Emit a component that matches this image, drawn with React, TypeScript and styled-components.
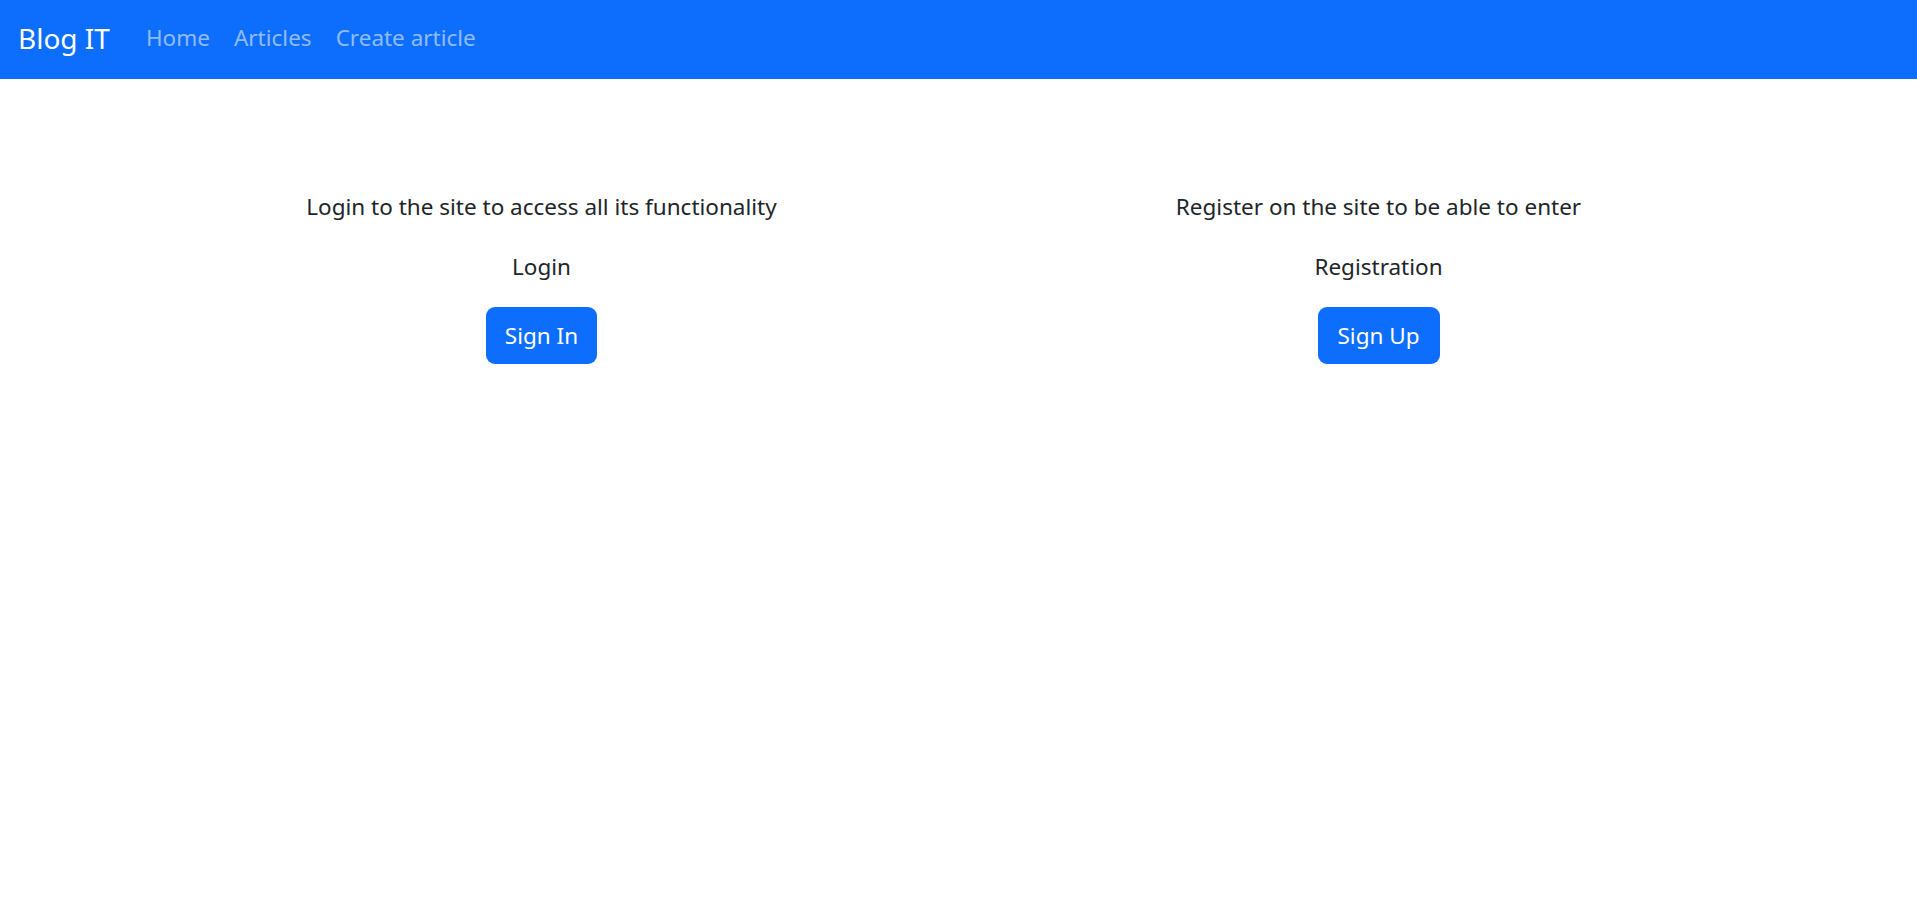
import React from "react";
import styled, { createGlobalStyle } from "styled-components";

const Global = createGlobalStyle`
  html, body { margin: 0; padding: 0; background: #fff; }
  body {
    font-family: "Noto Sans", "Open Sans", "Liberation Sans", sans-serif;
    color: #212529;
    -webkit-font-smoothing: antialiased;
  }
  * { box-sizing: border-box; }
`;

const NavBar = styled.nav`
  height: 79px;
  background: #0d6efd;
  display: flex;
  align-items: center;
  padding: 0 18px;
`;

const Brand = styled.a`
  color: #fff;
  font-size: 28px;
  line-height: 1;
  margin-right: 24px;
  text-decoration: none;
  padding-bottom: 3px;
`;

const NavList = styled.ul`
  list-style: none;
  display: flex;
  margin: 0;
  padding: 0;
`;

const NavLink = styled.a`
  display: block;
  padding: 0 12px 2px;
  font-size: 22.5px;
  line-height: 1;
  color: rgba(255, 255, 255, 0.55);
  text-decoration: none;
`;

const Content = styled.main`
  display: grid;
  grid-template-columns: 837px 837px;
  padding-left: 123px;
  padding-top: 110px;
`;

const Column = styled.section`
  display: flex;
  flex-direction: column;
  align-items: center;
  text-align: center;
`;

const Text = styled.p`
  margin: 0 0 24px;
  font-size: 22.5px;
  line-height: 36px;
`;

const Button = styled.button<{ $w: number }>`
  width: ${(p) => p.$w}px;
  height: 57px;
  border: none;
  border-radius: 9px;
  background: #0d6efd;
  color: #fff;
  font-family: inherit;
  font-size: 22.5px;
  cursor: pointer;
  margin-top: -2px;
`;

export default function App() {
  return (
    <>
      <Global />
      <NavBar>
        <Brand href="#">Blog IT</Brand>
        <NavList>
          <li><NavLink href="#">Home</NavLink></li>
          <li><NavLink href="#">Articles</NavLink></li>
          <li><NavLink href="#">Create article</NavLink></li>
        </NavList>
      </NavBar>
      <Content>
        <Column>
          <Text>Login to the site to access all its functionality</Text>
          <Text>Login</Text>
          <Button $w={111}>Sign In</Button>
        </Column>
        <Column>
          <Text>Register on the site to be able to enter</Text>
          <Text>Registration</Text>
          <Button $w={122}>Sign Up</Button>
        </Column>
      </Content>
    </>
  );
}
